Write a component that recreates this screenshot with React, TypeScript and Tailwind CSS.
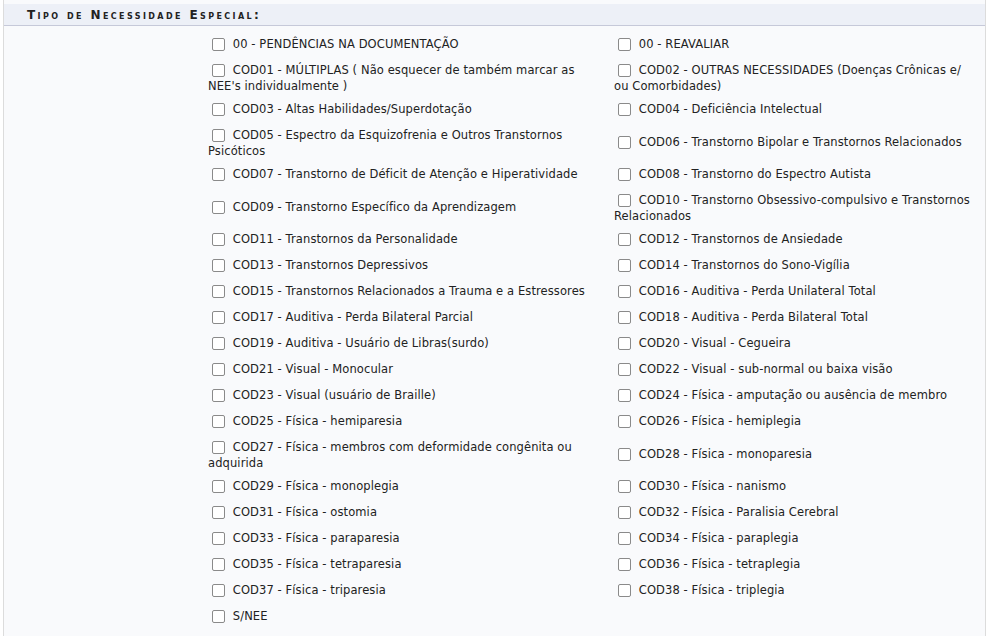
import React from "react";

const rows: [React.ReactNode, React.ReactNode | null][] = [
  ["00 - PENDÊNCIAS NA DOCUMENTAÇÃO", "00 - REAVALIAR"],
  [
    "COD01 - MÚLTIPLAS ( Não esquecer de também marcar as NEE's individualmente )",
    <>
      COD02 - OUTRAS NECESSIDADES (Doenças Crônicas e/
      <br />
      ou Comorbidades)
    </>,
  ],
  ["COD03 - Altas Habilidades/Superdotação", "COD04 - Deficiência Intelectual"],
  [
    "COD05 - Espectro da Esquizofrenia e Outros Transtornos Psicóticos",
    "COD06 - Transtorno Bipolar e Transtornos Relacionados",
  ],
  [
    "COD07 - Transtorno de Déficit de Atenção e Hiperatividade",
    "COD08 - Transtorno do Espectro Autista",
  ],
  [
    "COD09 - Transtorno Específico da Aprendizagem",
    "COD10 - Transtorno Obsessivo-compulsivo e Transtornos Relacionados",
  ],
  ["COD11 - Transtornos da Personalidade", "COD12 - Transtornos de Ansiedade"],
  ["COD13 - Transtornos Depressivos", "COD14 - Transtornos do Sono-Vigília"],
  [
    "COD15 - Transtornos Relacionados a Trauma e a Estressores",
    "COD16 - Auditiva - Perda Unilateral Total",
  ],
  ["COD17 - Auditiva - Perda Bilateral Parcial", "COD18 - Auditiva - Perda Bilateral Total"],
  ["COD19 - Auditiva - Usuário de Libras(surdo)", "COD20 - Visual - Cegueira"],
  ["COD21 - Visual - Monocular", "COD22 - Visual - sub-normal ou baixa visão"],
  ["COD23 - Visual (usuário de Braille)", "COD24 - Física - amputação ou ausência de membro"],
  ["COD25 - Física - hemiparesia", "COD26 - Física - hemiplegia"],
  [
    "COD27 - Física - membros com deformidade congênita ou adquirida",
    "COD28 - Física - monoparesia",
  ],
  ["COD29 - Física - monoplegia", "COD30 - Física - nanismo"],
  ["COD31 - Física - ostomia", "COD32 - Física - Paralisia Cerebral"],
  ["COD33 - Física - paraparesia", "COD34 - Física - paraplegia"],
  ["COD35 - Física - tetraparesia", "COD36 - Física - tetraplegia"],
  ["COD37 - Física - triparesia", "COD38 - Física - triplegia"],
  ["S/NEE", null],
];

function Item({ label, right }: { label: React.ReactNode; right?: boolean }) {
  return (
    <label
      className={
        "block pt-[3px] pb-[4px] leading-[13px] cursor-pointer " +
        (right ? "pr-[10px]" : "pr-[18px]")
      }
    >
      <span className="inline-block w-[13px] h-[13px] my-[3px] ml-[4px] mr-[4px] align-[-6px] border border-[#8a8a8a] rounded-[2px] bg-white box-border" />{" "}
      {label}
    </label>
  );
}

export default function App() {
  return (
    <div className="bg-white h-[636px] pl-[3px] overflow-hidden">
      <div className="w-[983px] h-[636px] border-l border-r border-[#dcdcdc] bg-[#f9fafc] pt-[4px] box-border font-['DejaVu_Sans',Verdana,sans-serif] text-[11.5px] tracking-[0.1px] text-[#222]">
        <div className="h-[22px] bg-[#edf0f7] border-b border-[#c6c9d9] box-border pl-[23px] flex items-center">
          <span className="font-bold text-[12px] tracking-[2.4px] [font-variant:small-caps] text-[#222] leading-none pt-[1px]">
            Tipo de Necessidade Especial:
          </span>
        </div>
        <div className="flex mt-[6px]">
          <div className="w-[204px] shrink-0" />
          <div className="grid grid-cols-[406px_1fr] items-center flex-1">
            {rows.map(([a, b], i) => (
              <React.Fragment key={i}>
                <Item label={a} />
                {b ? <Item label={b} right /> : <div />}
              </React.Fragment>
            ))}
          </div>
        </div>
      </div>
    </div>
  );
}
